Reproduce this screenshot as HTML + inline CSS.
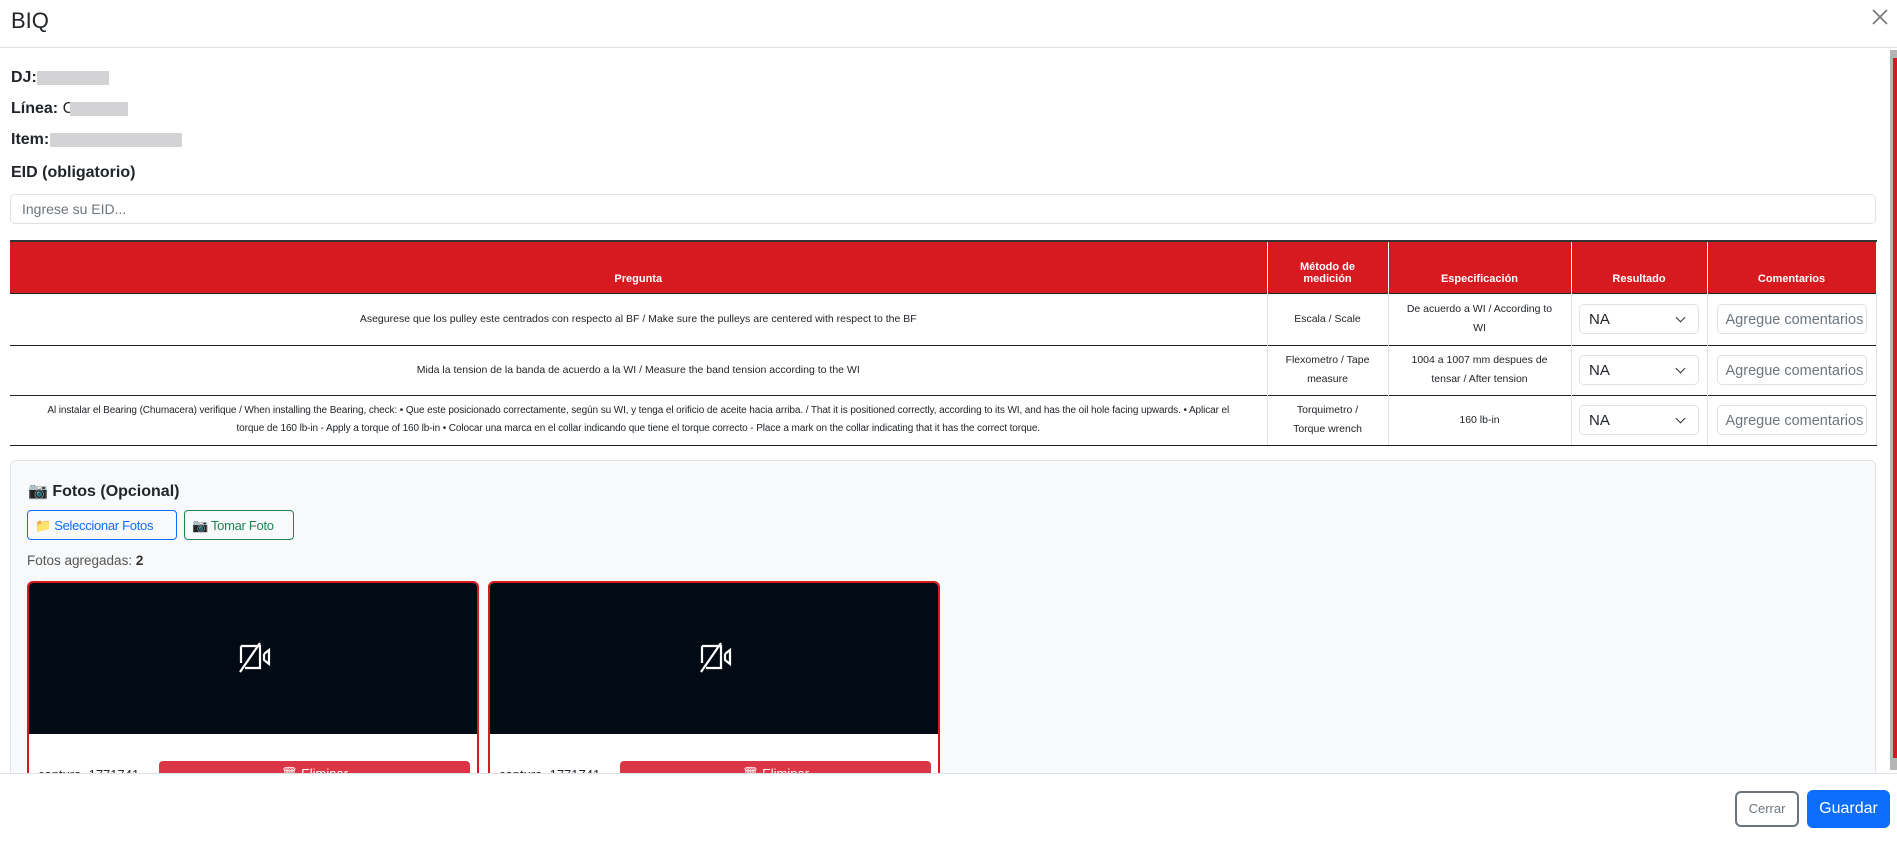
<!DOCTYPE html>
<html><head><meta charset="utf-8"><style>
*{box-sizing:border-box;margin:0;padding:0}
body{width:1897px;height:841px;overflow:hidden;background:#fff;font-family:"Liberation Sans",sans-serif;color:#212529;position:relative}
.abs{position:absolute}
.hdr{left:0;top:0;width:1897px;height:48px;border-bottom:1px solid #dee2e6}
.title{left:11px;top:8px;font-size:22px}
.lbl{left:11px;font-size:16px;font-weight:bold}
.blur{display:inline-block;background:#d3d3d5;height:14px;vertical-align:middle}
.inp{left:10px;top:194px;width:1866px;height:30px;border:1px solid #dee2e6;border-radius:5px;font-size:14px;color:#6c757d;padding:6px 11px}
table{position:absolute;left:10px;top:240px;width:1866px;border-collapse:collapse;font-size:10.5px;table-layout:fixed}
th{background:#d71920;color:#fff;height:52px;font-weight:bold;border-right:1px solid #fff;border-top:2px solid #333;padding:2px 6px 8px;vertical-align:bottom;text-align:center;font-size:11px}
td{border-top:1px solid #222;border-right:1px solid #dee2e6;text-align:center;padding:4px 14px;line-height:19px;vertical-align:middle}
td.c{padding:4px 6px}
tr:last-child td{border-bottom:1px solid #222}
.sel{width:120px;height:30px;border:1px solid #dee2e6;border-radius:5px;margin:0 auto;font-size:15px;text-align:left;padding:5px 9px;position:relative}
.sel:after{content:"";position:absolute;right:14px;top:9px;width:6px;height:6px;border-right:1.5px solid #333;border-bottom:1.5px solid #333;transform:rotate(45deg)}
.cm{width:150px;height:30px;border:1px solid #dee2e6;border-radius:5px;margin:0 auto;font-size:14.5px;color:#6c757d;padding:6px 8px;white-space:nowrap;overflow:hidden}
.panel{left:10px;top:460px;width:1866px;height:340px;background:#f8f9fa;border:1px solid #dee2e6;border-radius:6px}
.btn{border-radius:4px;font-size:13px;padding:7px 7px;height:30px;white-space:nowrap;letter-spacing:-0.3px}
.card{top:581px;width:452px;height:230px;border:2px solid #d71920;border-radius:6px;background:#fff;overflow:hidden}
.black{position:absolute;left:0;top:0;right:0;height:151px;background:#020b14}
.del{position:absolute;top:178px;left:130px;width:311px;height:40px;background:#dc3545;border-radius:4px;color:#fff;font-size:13px;text-align:center;padding-top:5px}
.cap{position:absolute;top:184px;left:9px;font-size:13px}
.foot{left:0;top:773px;width:1897px;height:68px;background:#fff;border-top:1px solid #dee2e6}
</style></head><body>
<div class="abs hdr"></div>
<div class="abs title">BIQ</div>
<svg class="abs" style="left:1871px;top:8px" width="18" height="18" viewBox="0 0 18 18"><path d="M2 2L16 16M16 2L2 16" stroke="#777" stroke-width="1.6"/></svg>
<div class="abs" style="left:1890px;top:50px;width:7px;height:720px;background:#b5b5b5"></div>
<div class="abs" style="left:1893px;top:58px;width:4px;height:700px;background:#d71920"></div>
<div class="abs lbl" style="top:69px">DJ: <span class="blur" style="width:72px;margin-left:-4px"></span></div>
<div class="abs lbl" style="top:100px">Línea: <span style="font-weight:normal">C</span><span class="blur" style="width:58px;margin-left:-4px"></span></div>
<div class="abs lbl" style="top:131px">Item: <span class="blur" style="width:132px;margin-left:-4px"></span></div>
<div class="abs lbl" style="top:164px">EID (obligatorio)</div>
<div class="abs inp">Ingrese su EID...</div>
<table>
<colgroup><col style="width:1257px"><col style="width:121px"><col style="width:183px"><col style="width:136px"><col style="width:169px"></colgroup>
<tr><th>Pregunta</th><th>Método de<br>medición</th><th>Especificación</th><th>Resultado</th><th>Comentarios</th></tr>
<tr style="height:52px"><td>Asegurese que los pulley este centrados con respecto al BF / Make sure the pulleys are centered with respect to the BF</td><td>Escala / Scale</td><td>De acuerdo a WI / According to WI</td><td class="c"><div class="sel">NA</div></td><td class="c"><div class="cm">Agregue comentarios</div></td></tr>
<tr style="height:50px"><td>Mida la tension de la banda de acuerdo a la WI / Measure the band tension according to the WI</td><td>Flexometro / Tape measure</td><td>1004 a 1007 mm despues de tensar / After tension</td><td class="c"><div class="sel">NA</div></td><td class="c"><div class="cm">Agregue comentarios</div></td></tr>
<tr style="height:50px"><td style="font-size:10px;line-height:18px;letter-spacing:-0.1px;padding:4px 30px">Al instalar el Bearing (Chumacera) verifique / When installing the Bearing, check: • Que este posicionado correctamente, según su WI, y tenga el orificio de aceite hacia arriba. / That it is positioned correctly, according to its WI, and has the oil hole facing upwards. • Aplicar el torque de 160 lb-in - Apply a torque of 160 lb-in • Colocar una marca en el collar indicando que tiene el torque correcto - Place a mark on the collar indicating that it has the correct torque.</td><td>Torquimetro / Torque wrench</td><td>160 lb-in</td><td class="c"><div class="sel">NA</div></td><td class="c"><div class="cm">Agregue comentarios</div></td></tr>
</table>
<div class="abs panel"></div>
<div class="abs" style="left:28px;top:481px;font-size:16px;font-weight:bold">📷 Fotos (Opcional)</div>
<div class="abs btn" style="left:27px;top:510px;width:150px;border:1px solid #0d6efd;color:#0d6efd">📁 Seleccionar Fotos</div>
<div class="abs btn" style="left:184px;top:510px;width:110px;border:1px solid #198754;color:#198754">📷 Tomar Foto</div>
<div class="abs" style="left:27px;top:553px;font-size:13.5px;color:#555">Fotos agregadas: <b style="color:#333">2</b></div>
<div class="abs card" style="left:27px"><div class="black"></div>
<svg style="position:absolute;left:208px;top:58px" width="36" height="32" viewBox="0 0 36 32"><path d="M4 5H23V27H8M4 5V22M27 13L32 9V23L27 19V13M3 31L23 2" stroke="#fff" stroke-width="2.2" fill="none"/></svg>
<div class="cap">captura_1771741</div><div class="del">🗑 Eliminar</div></div>
<div class="abs card" style="left:488px"><div class="black"></div>
<svg style="position:absolute;left:208px;top:58px" width="36" height="32" viewBox="0 0 36 32"><path d="M4 5H23V27H8M4 5V22M27 13L32 9V23L27 19V13M3 31L23 2" stroke="#fff" stroke-width="2.2" fill="none"/></svg>
<div class="cap">captura_1771741</div><div class="del">🗑 Eliminar</div></div>
<div class="abs foot"></div>
<div class="abs" style="left:1735px;top:791px;width:64px;height:36px;border:2px solid #6c757d;border-radius:6px;color:#6c757d;font-size:13px;text-align:center;line-height:32px">Cerrar</div>
<div class="abs" style="left:1807px;top:790px;width:83px;height:38px;background:#0d6efd;border-radius:6px;color:#fff;font-size:16px;text-align:center;line-height:38px">Guardar</div>
</body></html>
